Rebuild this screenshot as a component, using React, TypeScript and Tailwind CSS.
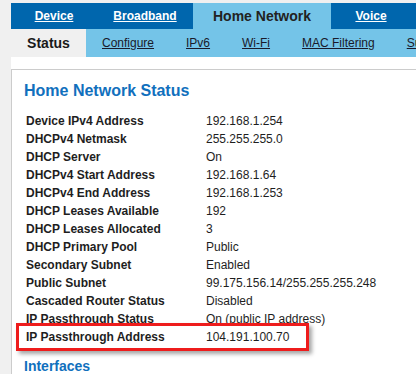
import React from "react";

const rows: [string, string][] = [
  ["Device IPv4 Address", "192.168.1.254"],
  ["DHCPv4 Netmask", "255.255.255.0"],
  ["DHCP Server", "On"],
  ["DHCPv4 Start Address", "192.168.1.64"],
  ["DHCPv4 End Address", "192.168.1.253"],
  ["DHCP Leases Available", "192"],
  ["DHCP Leases Allocated", "3"],
  ["DHCP Primary Pool", "Public"],
  ["Secondary Subnet", "Enabled"],
  ["Public Subnet", "99.175.156.14/255.255.255.248"],
  ["Cascaded Router Status", "Disabled"],
  ["IP Passthrough Status", "On (public IP address)"],
  ["IP Passthrough Address", "104.191.100.70"],
];

const subTabs = ["Configure", "IPv6", "Wi-Fi", "MAC Filtering", "Subnets & DHCP"];

export default function App() {
  return (
    <div
      className="w-[416px] h-[374px] overflow-hidden bg-[#f0f0f0] pl-[11px] pt-[3px] text-[#1e1e1e]"
      style={{ fontFamily: '"Liberation Sans", Arial, sans-serif' }}
    >
      <div className="bg-white w-[460px] h-full">
        {/* Top nav */}
        <div className="flex h-[26px] bg-[#0066ad] text-[12px] font-bold whitespace-nowrap">
          <div className="w-[86px] shrink-0 flex items-center justify-center text-white underline">Device</div>
          <div className="w-[96px] shrink-0 flex items-center justify-center text-white underline">Broadband</div>
          <div className="w-[138px] shrink-0 flex items-center justify-center bg-[#74c4e8] text-[14px] text-[#222]">
            Home Network
          </div>
          <div className="w-[80px] shrink-0 flex items-center justify-center text-white underline">Voice</div>
        </div>
        {/* Sub nav */}
        <div className="flex h-[28px] bg-[#74c4e8] text-[12px] whitespace-nowrap items-stretch">
          <div className="w-[75px] shrink-0 flex items-center justify-center bg-[#f0f0f0] text-[14px] font-bold text-[#1a1a1a]">
            Status
          </div>
          <div className="flex shrink-0 items-center gap-[32px] pl-[16px] text-[#1a1a2a]">
            {subTabs.map((t) => (
              <span key={t} className="underline shrink-0">
                {t}
              </span>
            ))}
          </div>
        </div>
        <div className="h-[12px]" />
        {/* Content */}
        <div className="border-t border-l border-[#cccccc] pl-[12px] pt-[11px]">
          <h1 className="text-[16px] leading-[20px] font-bold text-[#1170bd]">Home Network Status</h1>
          <div className="mt-[11px] pl-[2px] text-[12px]">
            {rows.map(([k, v], i) => (
              <div key={k} className="relative flex h-[18px] items-center">
                <div className="w-[180px] shrink-0 font-bold">{k}</div>
                <div>{v}</div>
                {i === rows.length - 1 && (
                  <div className="absolute left-[-10px] top-[-5px] w-[293px] h-[28px] border-[3px] border-[#ee1c1c] shadow-[3px_3px_4px_rgba(0,0,0,0.35)]" />
                )}
              </div>
            ))}
          </div>
          <h2 className="mt-[11px] text-[14px] leading-[18px] font-bold text-[#1170bd]">Interfaces</h2>
        </div>
      </div>
    </div>
  );
}
